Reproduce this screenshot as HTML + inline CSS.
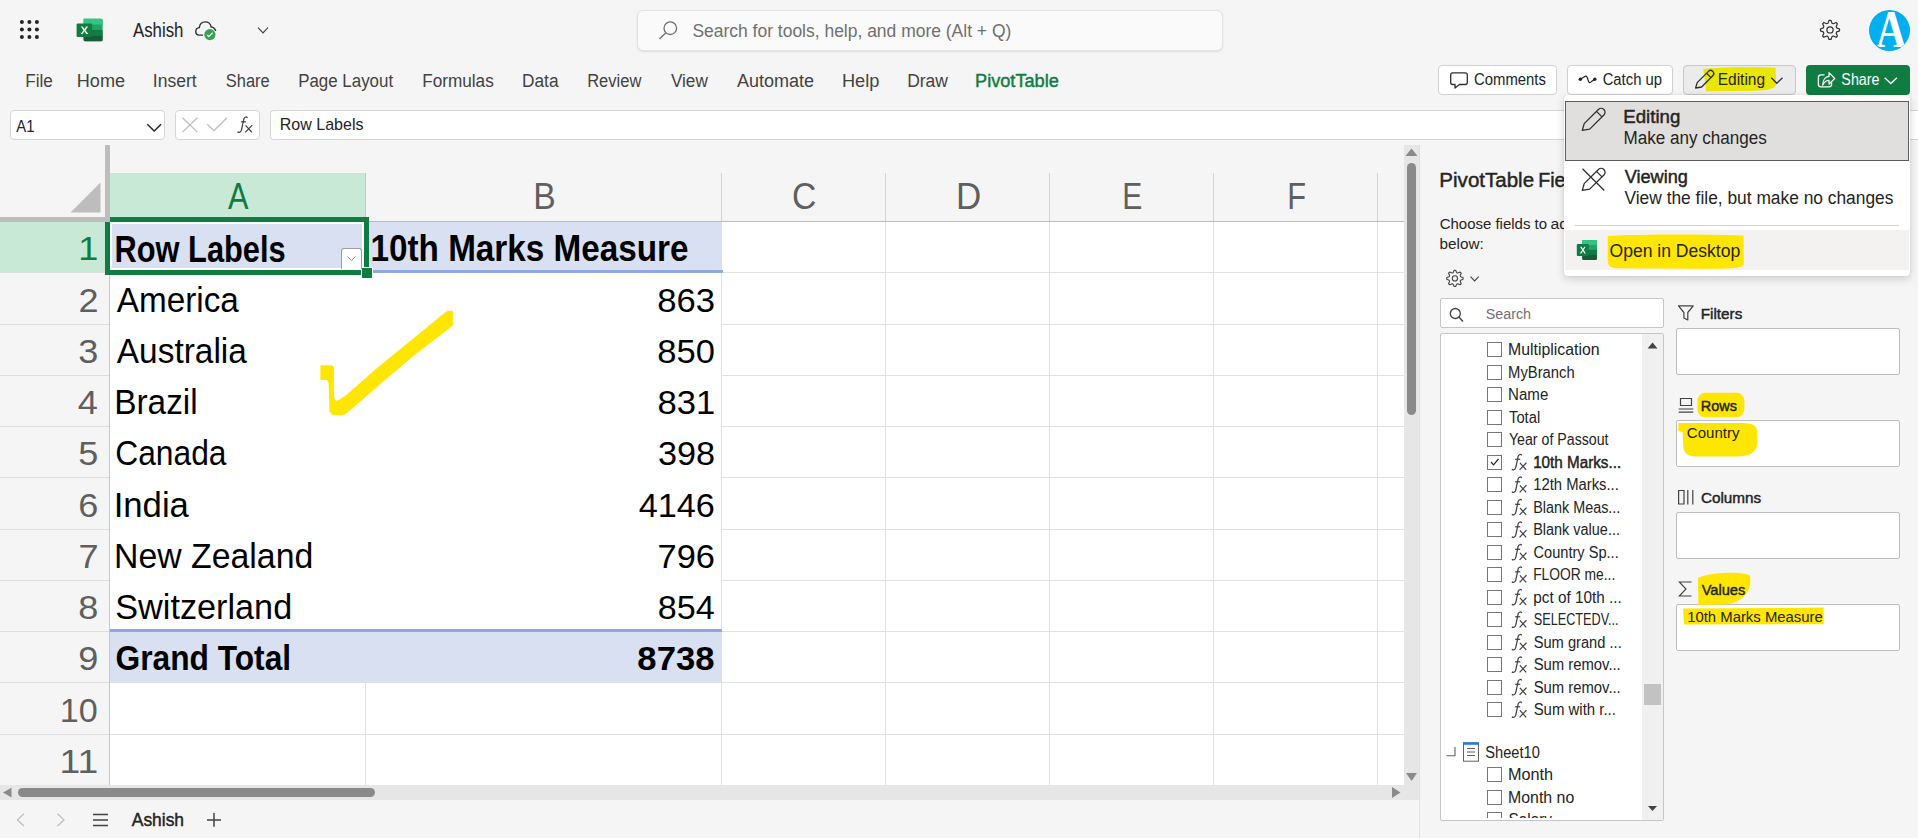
<!DOCTYPE html>
<html><head><meta charset="utf-8">
<style>
*{margin:0;padding:0;box-sizing:border-box}
html,body{width:1918px;height:838px;overflow:hidden;background:#f5f5f5;font-family:"Liberation Sans",sans-serif;position:relative}
.a{position:absolute}
svg{position:absolute;left:0;top:0;overflow:visible}
</style></head><body>

<div class="a" style="left:637px;top:10px;width:586px;height:41px;background:#fafafa;border:1px solid #e3e3e3;border-radius:6px;box-shadow:0 1px 2px rgba(0,0,0,0.10)"></div>
<div class="a" style="left:1438px;top:65px;width:119px;height:30px;background:#fff;border:1px solid #d1d1d1;border-radius:4px"></div>
<div class="a" style="left:1567px;top:65px;width:106px;height:30px;background:#fff;border:1px solid #d1d1d1;border-radius:4px"></div>
<div class="a" style="left:1683px;top:65px;width:113px;height:30px;background:#ebebeb;border:1px solid #c7c7c7;border-radius:4px"></div>
<div class="a" style="left:1806px;top:65px;width:104px;height:30px;background:#107c41;border-radius:4px"></div>
<div class="a" style="left:1869px;top:10px;width:41px;height:41px;background:#00aff0;border-radius:50%"></div>
<div class="a" style="left:270px;top:110px;width:1648px;height:30px;background:#fff;border:1px solid #d6d6d6;border-right:none;border-radius:4px 0 0 4px"></div>
<div class="a" style="left:10px;top:110px;width:155px;height:30px;background:#fff;border:1px solid #d6d6d6;border-radius:4px"></div>
<div class="a" style="left:175px;top:110px;width:85px;height:30px;background:#fff;border:1px solid #d6d6d6;border-radius:4px"></div>
<div class="a" style="left:109px;top:222px;width:1295px;height:563px;background:#fff"></div>
<div class="a" style="left:110px;top:173px;width:255px;height:48px;background:#c8e9d6"></div>
<div class="a" style="left:0px;top:222px;width:105px;height:50px;background:#c8e9d6"></div>
<div class="a" style="left:365px;top:173px;width:1px;height:48px;background:#a4d8b9"></div>
<div class="a" style="left:365px;top:682px;width:1px;height:103px;background:#e1e1e1"></div>
<div class="a" style="left:721px;top:173px;width:1px;height:48px;background:#d4d4d4"></div>
<div class="a" style="left:721px;top:222px;width:1px;height:563px;background:#e1e1e1"></div>
<div class="a" style="left:885px;top:173px;width:1px;height:48px;background:#d4d4d4"></div>
<div class="a" style="left:885px;top:222px;width:1px;height:563px;background:#e1e1e1"></div>
<div class="a" style="left:1049px;top:173px;width:1px;height:48px;background:#d4d4d4"></div>
<div class="a" style="left:1049px;top:222px;width:1px;height:563px;background:#e1e1e1"></div>
<div class="a" style="left:1213px;top:173px;width:1px;height:48px;background:#d4d4d4"></div>
<div class="a" style="left:1213px;top:222px;width:1px;height:563px;background:#e1e1e1"></div>
<div class="a" style="left:1377px;top:173px;width:1px;height:48px;background:#d4d4d4"></div>
<div class="a" style="left:1377px;top:222px;width:1px;height:563px;background:#e1e1e1"></div>
<div class="a" style="left:722px;top:272px;width:682px;height:1px;background:#e1e1e1"></div>
<div class="a" style="left:0px;top:272px;width:109px;height:1px;background:#dedede"></div>
<div class="a" style="left:722px;top:324px;width:682px;height:1px;background:#e1e1e1"></div>
<div class="a" style="left:0px;top:324px;width:109px;height:1px;background:#dedede"></div>
<div class="a" style="left:722px;top:375px;width:682px;height:1px;background:#e1e1e1"></div>
<div class="a" style="left:0px;top:375px;width:109px;height:1px;background:#dedede"></div>
<div class="a" style="left:722px;top:426px;width:682px;height:1px;background:#e1e1e1"></div>
<div class="a" style="left:0px;top:426px;width:109px;height:1px;background:#dedede"></div>
<div class="a" style="left:722px;top:477px;width:682px;height:1px;background:#e1e1e1"></div>
<div class="a" style="left:0px;top:477px;width:109px;height:1px;background:#dedede"></div>
<div class="a" style="left:722px;top:529px;width:682px;height:1px;background:#e1e1e1"></div>
<div class="a" style="left:0px;top:529px;width:109px;height:1px;background:#dedede"></div>
<div class="a" style="left:722px;top:580px;width:682px;height:1px;background:#e1e1e1"></div>
<div class="a" style="left:0px;top:580px;width:109px;height:1px;background:#dedede"></div>
<div class="a" style="left:722px;top:631px;width:682px;height:1px;background:#e1e1e1"></div>
<div class="a" style="left:0px;top:631px;width:109px;height:1px;background:#dedede"></div>
<div class="a" style="left:109px;top:682px;width:1295px;height:1px;background:#e1e1e1"></div>
<div class="a" style="left:0px;top:682px;width:109px;height:1px;background:#dedede"></div>
<div class="a" style="left:109px;top:734px;width:1295px;height:1px;background:#e1e1e1"></div>
<div class="a" style="left:0px;top:734px;width:109px;height:1px;background:#dedede"></div>
<div class="a" style="left:109px;top:222px;width:1px;height:563px;background:#c8c8c8"></div>
<div class="a" style="left:110px;top:222px;width:612px;height:50px;background:#d9e0f2"></div>
<div class="a" style="left:110px;top:631px;width:612px;height:51px;background:#d9e0f2"></div>
<div class="a" style="left:366px;top:270px;width:357px;height:3px;background:#8eaadc"></div>
<div class="a" style="left:110px;top:629px;width:612px;height:3px;background:#8eaadc"></div>
<div class="a" style="left:105px;top:145px;width:5px;height:77px;background:#bdbdbd"></div>
<div class="a" style="left:0px;top:217px;width:110px;height:5px;background:#bdbdbd"></div>
<div class="a" style="left:109px;top:221px;width:1295px;height:1px;background:#bdbdbd"></div>
<div class="a" style="left:110px;top:222px;width:254px;height:48px;border:2px solid #fff"></div>
<div class="a" style="left:105px;top:222px;width:5px;height:53px;background:#107c41"></div>
<div class="a" style="left:110px;top:217px;width:259px;height:5px;background:#107c41"></div>
<div class="a" style="left:364px;top:217px;width:5px;height:51px;background:#107c41"></div>
<div class="a" style="left:105px;top:270px;width:257px;height:5px;background:#107c41"></div>
<div class="a" style="left:361px;top:267px;width:12px;height:12px;background:#fff"></div>
<div class="a" style="left:362px;top:268px;width:10px;height:10px;background:#107c41"></div>
<div class="a" style="left:341px;top:248px;width:21px;height:21px;background:#fff;border:1px solid #9e9e9e;border-bottom:none;border-radius:3px 3px 0 0"></div>
<div class="a" style="left:1404px;top:145px;width:15px;height:655px;background:#e6e6e6"></div>
<div class="a" style="left:0px;top:785px;width:1404px;height:15px;background:#e6e6e6"></div>
<div class="a" style="left:1407px;top:163px;width:9px;height:252px;background:#8a8a8a;border-radius:5px"></div>
<div class="a" style="left:18px;top:788px;width:357px;height:9px;background:#8a8a8a;border-radius:5px"></div>
<div class="a" style="left:1419px;top:145px;width:1px;height:693px;background:#e0e0e0"></div>
<div class="a" style="left:1440px;top:298px;width:224px;height:30px;background:#fff;border:1px solid #c6c6c6;border-radius:2px"></div>
<div class="a" style="left:1440px;top:333px;width:224px;height:488px;background:#fff;border:1px solid #c6c6c6;border-radius:2px"></div>
<div class="a" style="left:1642px;top:334px;width:21px;height:486px;background:#f0f0f0"></div>
<div class="a" style="left:1644px;top:684px;width:17px;height:21px;background:#c2c2c2"></div>
<div class="a" style="left:1676px;top:328px;width:224px;height:47px;background:#fff;border:1px solid #bdbdbd;border-radius:2px"></div>
<div class="a" style="left:1676px;top:420px;width:224px;height:47px;background:#fff;border:1px solid #bdbdbd;border-radius:2px"></div>
<div class="a" style="left:1676px;top:512px;width:224px;height:47px;background:#fff;border:1px solid #bdbdbd;border-radius:2px"></div>
<div class="a" style="left:1676px;top:604px;width:224px;height:47px;background:#fff;border:1px solid #bdbdbd;border-radius:2px"></div>
<svg width="1918" height="838"><rect x="1697.4" y="392.8" width="47" height="24.5" rx="8" fill="#ffe600"/>
<path d="M1697.9 578 C1710 572.5 1740 571 1750 575.5 C1752 590 1745 602 1725 604.5 L1698.5 605 Z" fill="#ffe600"/>
<text x="133.00" y="37.20" style="font-family:'Liberation Sans',sans-serif;font-size:19.86px;font-weight:normal" fill="#242424" textLength="50.42" lengthAdjust="spacingAndGlyphs" >Ashish</text>
<text x="692.41" y="37.10" style="font-family:'Liberation Sans',sans-serif;font-size:18.70px;font-weight:normal" fill="#707070" textLength="318.90" lengthAdjust="spacingAndGlyphs" >Search for tools, help, and more (Alt + Q)</text>
<text x="25.33" y="87.20" style="font-family:'Liberation Sans',sans-serif;font-size:18.99px;font-weight:normal" fill="#424242" textLength="27.56" lengthAdjust="spacingAndGlyphs" >File</text>
<text x="76.75" y="87.20" style="font-family:'Liberation Sans',sans-serif;font-size:18.99px;font-weight:normal" fill="#424242" textLength="48.31" lengthAdjust="spacingAndGlyphs" >Home</text>
<text x="152.82" y="87.20" style="font-family:'Liberation Sans',sans-serif;font-size:18.99px;font-weight:normal" fill="#424242" textLength="43.88" lengthAdjust="spacingAndGlyphs" >Insert</text>
<text x="225.86" y="87.20" style="font-family:'Liberation Sans',sans-serif;font-size:18.99px;font-weight:normal" fill="#424242" textLength="43.84" lengthAdjust="spacingAndGlyphs" >Share</text>
<text x="298.15" y="87.20" style="font-family:'Liberation Sans',sans-serif;font-size:18.99px;font-weight:normal" fill="#424242" textLength="94.95" lengthAdjust="spacingAndGlyphs" >Page Layout</text>
<text x="422.23" y="87.20" style="font-family:'Liberation Sans',sans-serif;font-size:18.99px;font-weight:normal" fill="#424242" textLength="71.53" lengthAdjust="spacingAndGlyphs" >Formulas</text>
<text x="522.02" y="87.20" style="font-family:'Liberation Sans',sans-serif;font-size:18.99px;font-weight:normal" fill="#424242" textLength="36.52" lengthAdjust="spacingAndGlyphs" >Data</text>
<text x="587.18" y="87.20" style="font-family:'Liberation Sans',sans-serif;font-size:18.99px;font-weight:normal" fill="#424242" textLength="54.20" lengthAdjust="spacingAndGlyphs" >Review</text>
<text x="670.91" y="87.20" style="font-family:'Liberation Sans',sans-serif;font-size:18.99px;font-weight:normal" fill="#424242" textLength="36.88" lengthAdjust="spacingAndGlyphs" >View</text>
<text x="736.90" y="87.20" style="font-family:'Liberation Sans',sans-serif;font-size:18.99px;font-weight:normal" fill="#424242" textLength="77.22" lengthAdjust="spacingAndGlyphs" >Automate</text>
<text x="841.94" y="87.20" style="font-family:'Liberation Sans',sans-serif;font-size:18.99px;font-weight:normal" fill="#424242" textLength="37.52" lengthAdjust="spacingAndGlyphs" >Help</text>
<text x="907.20" y="87.20" style="font-family:'Liberation Sans',sans-serif;font-size:18.99px;font-weight:normal" fill="#424242" textLength="40.77" lengthAdjust="spacingAndGlyphs" >Draw</text>
<text x="975.05" y="87.20" style="font-family:'Liberation Sans',sans-serif;font-size:18.99px;font-weight:normal" fill="#107c41" textLength="83.75" lengthAdjust="spacingAndGlyphs"  stroke="#107c41" stroke-width="0.45">PivotTable</text>
<text x="1473.96" y="85.10" style="font-family:'Liberation Sans',sans-serif;font-size:15.80px;font-weight:normal" fill="#242424" textLength="71.96" lengthAdjust="spacingAndGlyphs" >Comments</text>
<text x="1602.66" y="85.10" style="font-family:'Liberation Sans',sans-serif;font-size:15.80px;font-weight:normal" fill="#242424" textLength="59.37" lengthAdjust="spacingAndGlyphs" >Catch up</text>
<text x="1841.36" y="85.10" style="font-family:'Liberation Sans',sans-serif;font-size:15.80px;font-weight:normal" fill="#ffffff" textLength="38.14" lengthAdjust="spacingAndGlyphs" >Share</text>
<text x="16.30" y="132.10" style="font-family:'Liberation Sans',sans-serif;font-size:17.39px;font-weight:normal" fill="#242424" textLength="18.22" lengthAdjust="spacingAndGlyphs" >A1</text>
<text x="279.82" y="130.00" style="font-family:'Liberation Sans',sans-serif;font-size:16.81px;font-weight:normal" fill="#242424" textLength="83.64" lengthAdjust="spacingAndGlyphs" >Row Labels</text>
<text x="228.00" y="209.00" style="font-family:'Liberation Sans',sans-serif;font-size:36.52px;font-weight:normal" fill="#107c41" textLength="20.46" lengthAdjust="spacingAndGlyphs" >A</text>
<text x="533.31" y="209.00" style="font-family:'Liberation Sans',sans-serif;font-size:36.52px;font-weight:normal" fill="#5f5f5f" textLength="22.44" lengthAdjust="spacingAndGlyphs" >B</text>
<text x="792.11" y="209.00" style="font-family:'Liberation Sans',sans-serif;font-size:36.52px;font-weight:normal" fill="#5f5f5f" textLength="24.34" lengthAdjust="spacingAndGlyphs" >C</text>
<text x="955.90" y="209.00" style="font-family:'Liberation Sans',sans-serif;font-size:36.23px;font-weight:normal" fill="#5f5f5f" textLength="25.25" lengthAdjust="spacingAndGlyphs" >D</text>
<text x="1122.29" y="209.00" style="font-family:'Liberation Sans',sans-serif;font-size:36.23px;font-weight:normal" fill="#5f5f5f" textLength="20.07" lengthAdjust="spacingAndGlyphs" >E</text>
<text x="1287.23" y="209.00" style="font-family:'Liberation Sans',sans-serif;font-size:36.23px;font-weight:normal" fill="#5f5f5f" textLength="18.82" lengthAdjust="spacingAndGlyphs" >F</text>
<text x="78.39" y="260.30" style="font-family:'Liberation Sans',sans-serif;font-size:34.06px;font-weight:normal" fill="#107c41" textLength="20.08" lengthAdjust="spacingAndGlyphs" >1</text>
<text x="78.57" y="311.55" style="font-family:'Liberation Sans',sans-serif;font-size:34.06px;font-weight:normal" fill="#5f5f5f" textLength="20.08" lengthAdjust="spacingAndGlyphs" >2</text>
<text x="78.21" y="362.80" style="font-family:'Liberation Sans',sans-serif;font-size:34.06px;font-weight:normal" fill="#5f5f5f" textLength="20.08" lengthAdjust="spacingAndGlyphs" >3</text>
<text x="77.85" y="414.05" style="font-family:'Liberation Sans',sans-serif;font-size:34.06px;font-weight:normal" fill="#5f5f5f" textLength="20.08" lengthAdjust="spacingAndGlyphs" >4</text>
<text x="78.21" y="465.30" style="font-family:'Liberation Sans',sans-serif;font-size:34.06px;font-weight:normal" fill="#5f5f5f" textLength="20.08" lengthAdjust="spacingAndGlyphs" >5</text>
<text x="78.21" y="516.55" style="font-family:'Liberation Sans',sans-serif;font-size:34.06px;font-weight:normal" fill="#5f5f5f" textLength="20.08" lengthAdjust="spacingAndGlyphs" >6</text>
<text x="78.57" y="567.80" style="font-family:'Liberation Sans',sans-serif;font-size:34.06px;font-weight:normal" fill="#5f5f5f" textLength="20.08" lengthAdjust="spacingAndGlyphs" >7</text>
<text x="78.21" y="619.05" style="font-family:'Liberation Sans',sans-serif;font-size:34.06px;font-weight:normal" fill="#5f5f5f" textLength="20.08" lengthAdjust="spacingAndGlyphs" >8</text>
<text x="78.39" y="670.30" style="font-family:'Liberation Sans',sans-serif;font-size:34.06px;font-weight:normal" fill="#5f5f5f" textLength="20.08" lengthAdjust="spacingAndGlyphs" >9</text>
<text x="59.73" y="721.55" style="font-family:'Liberation Sans',sans-serif;font-size:34.06px;font-weight:normal" fill="#5f5f5f" textLength="38.04" lengthAdjust="spacingAndGlyphs" >10</text>
<text x="59.50" y="772.80" style="font-family:'Liberation Sans',sans-serif;font-size:34.06px;font-weight:normal" fill="#5f5f5f" textLength="38.80" lengthAdjust="spacingAndGlyphs" >11</text>
<text x="114.50" y="261.50" style="font-family:'Liberation Sans',sans-serif;font-size:36.81px;font-weight:bold" fill="#000" textLength="171.19" lengthAdjust="spacingAndGlyphs" >Row Labels</text>
<text x="370.50" y="261.30" style="font-family:'Liberation Sans',sans-serif;font-size:36.81px;font-weight:bold" fill="#000" textLength="318.07" lengthAdjust="spacingAndGlyphs" >10th Marks Measure</text>
<text x="116.80" y="311.55" style="font-family:'Liberation Sans',sans-serif;font-size:34.49px;font-weight:normal" fill="#000" textLength="121.99" lengthAdjust="spacingAndGlyphs" >America</text>
<text x="657.24" y="311.55" style="font-family:'Liberation Sans',sans-serif;font-size:33.04px;font-weight:normal" fill="#000" textLength="57.76" lengthAdjust="spacingAndGlyphs" >863</text>
<text x="116.80" y="362.80" style="font-family:'Liberation Sans',sans-serif;font-size:34.49px;font-weight:normal" fill="#000" textLength="130.03" lengthAdjust="spacingAndGlyphs" >Australia</text>
<text x="657.25" y="362.80" style="font-family:'Liberation Sans',sans-serif;font-size:33.04px;font-weight:normal" fill="#000" textLength="57.58" lengthAdjust="spacingAndGlyphs" >850</text>
<text x="114.13" y="414.05" style="font-family:'Liberation Sans',sans-serif;font-size:34.49px;font-weight:normal" fill="#000" textLength="83.57" lengthAdjust="spacingAndGlyphs" >Brazil</text>
<text x="657.44" y="414.05" style="font-family:'Liberation Sans',sans-serif;font-size:33.04px;font-weight:normal" fill="#000" textLength="57.74" lengthAdjust="spacingAndGlyphs" >831</text>
<text x="115.21" y="465.30" style="font-family:'Liberation Sans',sans-serif;font-size:34.49px;font-weight:normal" fill="#000" textLength="111.29" lengthAdjust="spacingAndGlyphs" >Canada</text>
<text x="657.93" y="465.30" style="font-family:'Liberation Sans',sans-serif;font-size:33.04px;font-weight:normal" fill="#000" textLength="57.06" lengthAdjust="spacingAndGlyphs" >398</text>
<text x="113.68" y="516.55" style="font-family:'Liberation Sans',sans-serif;font-size:34.49px;font-weight:normal" fill="#000" textLength="75.24" lengthAdjust="spacingAndGlyphs" >India</text>
<text x="638.72" y="516.55" style="font-family:'Liberation Sans',sans-serif;font-size:33.04px;font-weight:normal" fill="#000" textLength="76.14" lengthAdjust="spacingAndGlyphs" >4146</text>
<text x="114.10" y="567.80" style="font-family:'Liberation Sans',sans-serif;font-size:34.49px;font-weight:normal" fill="#000" textLength="199.18" lengthAdjust="spacingAndGlyphs" >New Zealand</text>
<text x="657.58" y="567.80" style="font-family:'Liberation Sans',sans-serif;font-size:33.04px;font-weight:normal" fill="#000" textLength="57.42" lengthAdjust="spacingAndGlyphs" >796</text>
<text x="115.26" y="619.05" style="font-family:'Liberation Sans',sans-serif;font-size:34.49px;font-weight:normal" fill="#000" textLength="176.94" lengthAdjust="spacingAndGlyphs" >Switzerland</text>
<text x="657.77" y="619.05" style="font-family:'Liberation Sans',sans-serif;font-size:33.04px;font-weight:normal" fill="#000" textLength="56.88" lengthAdjust="spacingAndGlyphs" >854</text>
<text x="115.53" y="670.30" style="font-family:'Liberation Sans',sans-serif;font-size:35.94px;font-weight:bold" fill="#000" textLength="175.60" lengthAdjust="spacingAndGlyphs" >Grand Total</text>
<text x="637.36" y="670.30" style="font-family:'Liberation Sans',sans-serif;font-size:33.62px;font-weight:bold" fill="#000" textLength="77.17" lengthAdjust="spacingAndGlyphs" >8738</text>
<text x="1439.36" y="187.00" style="font-family:'Liberation Sans',sans-serif;font-size:20.58px;font-weight:normal" fill="#242424" textLength="94.74" lengthAdjust="spacingAndGlyphs"  stroke="#242424" stroke-width="0.45">PivotTable</text>
<text x="1538.23" y="187.00" style="font-family:'Liberation Sans',sans-serif;font-size:20.58px;font-weight:normal" fill="#242424" textLength="52.41" lengthAdjust="spacingAndGlyphs"  stroke="#242424" stroke-width="0.45">Fields</text>
<text x="1439.75" y="229.20" style="font-family:'Liberation Sans',sans-serif;font-size:15.36px;font-weight:normal" fill="#242424" textLength="107.26" lengthAdjust="spacingAndGlyphs" >Choose fields to</text>
<text x="1550.47" y="229.20" style="font-family:'Liberation Sans',sans-serif;font-size:15.36px;font-weight:normal" fill="#242424" textLength="89.62" lengthAdjust="spacingAndGlyphs" >add to report</text>
<text x="1439.61" y="248.60" style="font-family:'Liberation Sans',sans-serif;font-size:15.51px;font-weight:normal" fill="#242424" textLength="44.18" lengthAdjust="spacingAndGlyphs" >below:</text>
<text x="1485.76" y="319.00" style="font-family:'Liberation Sans',sans-serif;font-size:15.51px;font-weight:normal" fill="#707070" textLength="45.22" lengthAdjust="spacingAndGlyphs" >Search</text>
<text x="1700.78" y="319.00" style="font-family:'Liberation Sans',sans-serif;font-size:15.51px;font-weight:normal" fill="#242424" textLength="41.49" lengthAdjust="spacingAndGlyphs"  stroke="#242424" stroke-width="0.45">Filters</text>
<text x="1700.84" y="411.00" style="font-family:'Liberation Sans',sans-serif;font-size:15.51px;font-weight:normal" fill="#242424" textLength="36.17" lengthAdjust="spacingAndGlyphs"  stroke="#242424" stroke-width="0.45">Rows</text>
<text x="1700.94" y="503.30" style="font-family:'Liberation Sans',sans-serif;font-size:15.51px;font-weight:normal" fill="#242424" textLength="60.21" lengthAdjust="spacingAndGlyphs"  stroke="#242424" stroke-width="0.45">Columns</text>
<text x="1701.63" y="595.10" style="font-family:'Liberation Sans',sans-serif;font-size:15.51px;font-weight:normal" fill="#242424" textLength="43.66" lengthAdjust="spacingAndGlyphs"  stroke="#242424" stroke-width="0.45">Values</text>
<circle cx="21.9" cy="21.9" r="2.0" fill="#242424"/>
<circle cx="29.4" cy="21.9" r="2.0" fill="#242424"/>
<circle cx="36.9" cy="21.9" r="2.0" fill="#242424"/>
<circle cx="21.9" cy="29.4" r="2.0" fill="#242424"/>
<circle cx="29.4" cy="29.4" r="2.0" fill="#242424"/>
<circle cx="36.9" cy="29.4" r="2.0" fill="#242424"/>
<circle cx="21.9" cy="36.9" r="2.0" fill="#242424"/>
<circle cx="29.4" cy="36.9" r="2.0" fill="#242424"/>
<circle cx="36.9" cy="36.9" r="2.0" fill="#242424"/>
<g transform="translate(76.6,18.8) scale(1.0,1.0)"><path d="M7 0 H24.5 A1.5 1.5 0 0 1 26 1.5 V21 A1.5 1.5 0 0 1 24.5 22.5 H8.5 A1.5 1.5 0 0 1 7 21 Z" fill="#21a366"/><path d="M7 0 H24.5 A1.5 1.5 0 0 1 26 1.5 V5.6 H7 Z" fill="#33c481"/><rect x="7" y="11.2" width="19" height="5.6" fill="#107c41"/><path d="M7 16.8 H26 V21 A1.5 1.5 0 0 1 24.5 22.5 H8.5 A1.5 1.5 0 0 1 7 21 Z" fill="#185c37"/><rect x="0" y="4.6" width="15.5" height="13.5" rx="1.2" fill="#107c41"/><path d="M4.2 7.6 L6.9 11.35 L4.0 15.2 H5.9 L7.85 12.5 L9.8 15.2 H11.7 L8.8 11.35 L11.5 7.6 H9.6 L7.85 10.2 L6.1 7.6 Z" fill="#fff"/></g>
<path d="M202.6 35.1 H199.3 C197.3 35.1 195.8 33.5 195.8 31.4 C195.8 29.4 197.3 27.8 199.3 27.6 C199.8 24.2 202.3 21.9 205.3 21.9 C208.2 21.9 210.6 24.1 211.1 26.9 C213.2 27.2 214.8 28.4 215.6 30.4" fill="none" stroke="#303030" stroke-width="1.4" stroke-linecap="round"/>
<circle cx="209.9" cy="34.6" r="5.6" fill="#36a152"/>
<path d="M207.3 35 L208.9 36.6 L212.6 32.7" fill="none" stroke="#fff" stroke-width="1.3"/>
<path d="M258 27.6 L263 32.8 L268 27.6" fill="none" stroke="#424242" stroke-width="1.2"/>
<circle cx="670.3" cy="28.2" r="6.3" fill="none" stroke="#707070" stroke-width="1.3"/><path d="M665.8 32.7 L659.5 39" stroke="#707070" stroke-width="1.4"/>
<path d="M1829.06 20.35 L1830.94 20.35 L1832.03 23.20 L1833.30 23.73 L1836.09 22.48 L1837.42 23.81 L1836.17 26.60 L1836.70 27.87 L1839.55 28.96 L1839.55 30.84 L1836.70 31.93 L1836.17 33.20 L1837.42 35.99 L1836.09 37.32 L1833.30 36.07 L1832.03 36.60 L1830.94 39.45 L1829.06 39.45 L1827.97 36.60 L1826.70 36.07 L1823.91 37.32 L1822.58 35.99 L1823.83 33.20 L1823.30 31.93 L1820.45 30.84 L1820.45 28.96 L1823.30 27.87 L1823.83 26.60 L1822.58 23.81 L1823.91 22.48 L1826.70 23.73 L1827.97 23.20 Z" fill="none" stroke="#303030" stroke-width="1.2" stroke-linejoin="round"/>
<circle cx="1830" cy="29.9" r="3.1" fill="none" stroke="#303030" stroke-width="1.2"/>
<clipPath id="av"><circle cx="1890.1" cy="29.9" r="20.2"/></clipPath>
<text clip-path="url(#av)" x="1876.08" y="46.50" style="font-family:'Liberation Serif',serif;font-size:53.79px;font-weight:bold" fill="#ffffff" textLength="30.22" lengthAdjust="spacingAndGlyphs" >A</text>
<path d="M1452.7 72.8 H1465.3 A2 2 0 0 1 1467.3 74.8 V82.5 A2 2 0 0 1 1465.3 84.5 H1459.4 L1455 88 V84.5 H1452.7 A2 2 0 0 1 1450.7 82.5 V74.8 A2 2 0 0 1 1452.7 72.8 Z" fill="none" stroke="#303030" stroke-width="1.3" stroke-linejoin="round"/>
<circle cx="1580.3" cy="79.3" r="1.7" fill="#242424"/><circle cx="1594.8" cy="79.3" r="1.7" fill="#242424"/>
<path d="M1580.3 79.3 L1584 77 C1585.5 75.8 1586.5 75.5 1587.2 77.5 L1588.6 81.5 C1589.3 83.2 1590.4 83 1591.5 81.5 L1594.8 79.3" fill="none" stroke="#242424" stroke-width="1.2"/>
<path d="M1703.2 69 C1720 67.5 1745 66.8 1775.5 67.8 L1776 84.5 C1775 88.5 1768 90.5 1755 90.8 L1706 91.3 L1705.5 84 Z" fill="#e9e600"/>
<path d="M1695.6 88 L1697.2 82.6 L1708.4 71.4 C1709.6 70.2 1711.6 70.2 1712.8 71.4 C1714 72.6 1714 74.6 1712.8 75.8 L1701.6 87 Z M1706.6 73.2 L1711 77.6" fill="none" stroke="#303030" stroke-width="1.3" stroke-linejoin="round"/>
<text x="1717.76" y="84.90" style="font-family:'Liberation Sans',sans-serif;font-size:15.80px;font-weight:normal" fill="#242424" textLength="47.28" lengthAdjust="spacingAndGlyphs" >Editing</text>
<path d="M1771.3 77.8 L1776.8 83.3 L1782.5 77.8" fill="none" stroke="#303030" stroke-width="1.3"/>
<path d="M1824.5 74.8 H1821 A2.6 2.6 0 0 0 1818.4 77.4 V84.2 A2.6 2.6 0 0 0 1821 86.8 H1829 A2.6 2.6 0 0 0 1831.6 84.2 V82.8" fill="none" stroke="#fff" stroke-width="1.3"/>
<path d="M1822.6 85.2 C1822.8 79.8 1825.6 76.6 1829 76.4 V72.6 L1834.8 78.5 L1829 84.2 V80.4 C1826.4 80.4 1824.2 82 1822.6 85.2 Z" fill="none" stroke="#fff" stroke-width="1.2" stroke-linejoin="round"/>
<path d="M1884.7 77.8 L1890.8 83.5 L1896.9 77.8" fill="none" stroke="#fff" stroke-width="1.3"/>
<path d="M147.3 124.2 L154.2 131 L161.1 124.2" fill="none" stroke="#242424" stroke-width="1.5"/>
<path d="M182.5 117.8 L197.4 132.1 M197.4 117.8 L182.5 132.1" stroke="#bdbdbd" stroke-width="1.3"/>
<path d="M207.3 124.3 L214 130.6 L226.8 118" fill="none" stroke="#bdbdbd" stroke-width="1.3"/>
<g transform="translate(237.3,116.3) scale(1.0)" fill="none" stroke="#424242" stroke-width="1.25"><path d="M10.2 1.5 C9.3 0.4 7.4 0.2 6.6 2.4 L4.2 13.6 C3.6 16.3 1.5 16.6 0.3 15.4"/><path d="M3.6 5.5 H8.6"/><path d="M8.3 9 L14.6 16 M14.9 8.8 L8.0 16.1"/></g>
<path d="M100.5 182.5 V212.5 H70.5 Z" fill="#bdbdbd"/>
<path d="M347.5 256.5 L351.5 260.5 L355.5 256.5" fill="none" stroke="#8a8a8a" stroke-width="1"/>
<path d="M320.4 365.2 L331.6 365.2 Q333.9 365.6 333.9 367.8 L333.9 395.4 Q334.5 399.8 336.5 400.7 Q340 399.5 345.8 395.4 L375.6 369.3 L447.2 310.7 L452.9 310.7 L452.9 325.4 L414.4 355.2 L380.1 384.3 L350.3 410.3 Q345.5 414.8 341.3 415.6 L332.4 414.8 Q329.6 413 329.4 410.3 L328.6 383.5 Q328.2 380.4 326.4 380.1 L320.4 379.8 Z" fill="#ffe600"/>
<path d="M1405.5 156 L1411.5 148.5 L1417.5 156 Z" fill="#8a8a8a"/>
<path d="M1406 773 L1417 773 L1411.5 781 Z" fill="#8a8a8a"/>
<path d="M11.5 787.7 L11.5 797.5 L3 792.6 Z" fill="#8a8a8a"/>
<path d="M1392 787 L1392 798 L1400.5 792.5 Z" fill="#8a8a8a"/>
<path d="M24 813.8 L17.5 819.9 L24 826" fill="none" stroke="#bdbdbd" stroke-width="1.3"/>
<path d="M57.5 813.8 L64 819.9 L57.5 826" fill="none" stroke="#bdbdbd" stroke-width="1.3"/>
<path d="M93 814.5 H108 M93 820 H108 M93 825.5 H108" stroke="#424242" stroke-width="1.4"/>
<text x="131.80" y="825.90" style="font-family:'Liberation Sans',sans-serif;font-size:18.84px;font-weight:normal" fill="#242424" textLength="52.26" lengthAdjust="spacingAndGlyphs"  stroke="#242424" stroke-width="0.45">Ashish</text>
<path d="M214 813 V826.7 M207 819.9 H221" stroke="#424242" stroke-width="1.5"/>
<path d="M1454.10 270.24 L1455.70 270.24 L1456.64 272.66 L1457.73 273.11 L1460.10 272.06 L1461.24 273.20 L1460.19 275.57 L1460.64 276.66 L1463.06 277.60 L1463.06 279.20 L1460.64 280.14 L1460.19 281.23 L1461.24 283.60 L1460.10 284.74 L1457.73 283.69 L1456.64 284.14 L1455.70 286.56 L1454.10 286.56 L1453.16 284.14 L1452.07 283.69 L1449.70 284.74 L1448.56 283.60 L1449.61 281.23 L1449.16 280.14 L1446.74 279.20 L1446.74 277.60 L1449.16 276.66 L1449.61 275.57 L1448.56 273.20 L1449.70 272.06 L1452.07 273.11 L1453.16 272.66 Z" fill="none" stroke="#424242" stroke-width="1.1" stroke-linejoin="round"/>
<circle cx="1454.9" cy="278.4" r="2.6" fill="none" stroke="#424242" stroke-width="1.1"/>
<path d="M1470.5 276.7 L1474.6 281 L1478.8 276.7" fill="none" stroke="#424242" stroke-width="1.1"/>
<circle cx="1455.3" cy="313.5" r="5" fill="none" stroke="#424242" stroke-width="1.3"/><path d="M1458.9 317.1 L1463 321.5" stroke="#424242" stroke-width="1.4"/>
<path d="M1647.6 348.5 L1652.5 342.6 L1657.5 348.5 Z" fill="#424242"/>
<path d="M1648 806 L1657 806 L1652.5 811 Z" fill="#424242"/>
<clipPath id="lst"><rect x="1441" y="334" width="201" height="484"/></clipPath><g clip-path="url(#lst)">
<rect x="1487.5" y="342.5" width="14" height="14" fill="#fff" stroke="#767676" stroke-width="1"/>
<text x="1508.03" y="355.10" style="font-family:'Liberation Sans',sans-serif;font-size:15.80px;font-weight:normal" fill="#242424" textLength="91.61" lengthAdjust="spacingAndGlyphs" >Multiplication</text>
<rect x="1487.5" y="365.5" width="14" height="14" fill="#fff" stroke="#767676" stroke-width="1"/>
<text x="1508.12" y="377.60" style="font-family:'Liberation Sans',sans-serif;font-size:15.80px;font-weight:normal" fill="#242424" textLength="66.57" lengthAdjust="spacingAndGlyphs" >MyBranch</text>
<rect x="1487.5" y="387.5" width="14" height="14" fill="#fff" stroke="#767676" stroke-width="1"/>
<text x="1508.09" y="400.10" style="font-family:'Liberation Sans',sans-serif;font-size:15.80px;font-weight:normal" fill="#242424" textLength="40.22" lengthAdjust="spacingAndGlyphs" >Name</text>
<rect x="1487.5" y="410.5" width="14" height="14" fill="#fff" stroke="#767676" stroke-width="1"/>
<text x="1509.00" y="422.60" style="font-family:'Liberation Sans',sans-serif;font-size:15.80px;font-weight:normal" fill="#242424" textLength="31.19" lengthAdjust="spacingAndGlyphs" >Total</text>
<rect x="1487.5" y="432.5" width="14" height="14" fill="#fff" stroke="#767676" stroke-width="1"/>
<text x="1508.95" y="445.10" style="font-family:'Liberation Sans',sans-serif;font-size:15.80px;font-weight:normal" fill="#242424" textLength="99.58" lengthAdjust="spacingAndGlyphs" >Year of Passout</text>
<rect x="1487.5" y="455.5" width="14" height="14" fill="#fff" stroke="#767676" stroke-width="1"/>
<g transform="translate(1511.6,453.8) scale(1.0)" fill="none" stroke="#424242" stroke-width="1.25"><path d="M10.2 1.5 C9.3 0.4 7.4 0.2 6.6 2.4 L4.2 13.6 C3.6 16.3 1.5 16.6 0.3 15.4"/><path d="M3.6 5.5 H8.6"/><path d="M8.3 9 L14.6 16 M14.9 8.8 L8.0 16.1"/></g>
<text x="1533.16" y="467.60" style="font-family:'Liberation Sans',sans-serif;font-size:15.80px;font-weight:normal" fill="#242424" textLength="87.99" lengthAdjust="spacingAndGlyphs"  stroke="#242424" stroke-width="0.45">10th Marks...</text>
<path d="M1491 462.0 L1493.5 464.8 L1498.5 459.0" fill="none" stroke="#242424" stroke-width="1.2"/>
<rect x="1487.5" y="477.5" width="14" height="14" fill="#fff" stroke="#767676" stroke-width="1"/>
<g transform="translate(1511.6,476.3) scale(1.0)" fill="none" stroke="#424242" stroke-width="1.25"><path d="M10.2 1.5 C9.3 0.4 7.4 0.2 6.6 2.4 L4.2 13.6 C3.6 16.3 1.5 16.6 0.3 15.4"/><path d="M3.6 5.5 H8.6"/><path d="M8.3 9 L14.6 16 M14.9 8.8 L8.0 16.1"/></g>
<text x="1533.19" y="490.10" style="font-family:'Liberation Sans',sans-serif;font-size:15.80px;font-weight:normal" fill="#242424" textLength="85.62" lengthAdjust="spacingAndGlyphs" >12th Marks...</text>
<rect x="1487.5" y="500.5" width="14" height="14" fill="#fff" stroke="#767676" stroke-width="1"/>
<g transform="translate(1511.6,498.8) scale(1.0)" fill="none" stroke="#424242" stroke-width="1.25"><path d="M10.2 1.5 C9.3 0.4 7.4 0.2 6.6 2.4 L4.2 13.6 C3.6 16.3 1.5 16.6 0.3 15.4"/><path d="M3.6 5.5 H8.6"/><path d="M8.3 9 L14.6 16 M14.9 8.8 L8.0 16.1"/></g>
<text x="1533.15" y="512.60" style="font-family:'Liberation Sans',sans-serif;font-size:15.80px;font-weight:normal" fill="#242424" textLength="87.19" lengthAdjust="spacingAndGlyphs" >Blank Meas...</text>
<rect x="1487.5" y="522.5" width="14" height="14" fill="#fff" stroke="#767676" stroke-width="1"/>
<g transform="translate(1511.6,521.3) scale(1.0)" fill="none" stroke="#424242" stroke-width="1.25"><path d="M10.2 1.5 C9.3 0.4 7.4 0.2 6.6 2.4 L4.2 13.6 C3.6 16.3 1.5 16.6 0.3 15.4"/><path d="M3.6 5.5 H8.6"/><path d="M8.3 9 L14.6 16 M14.9 8.8 L8.0 16.1"/></g>
<text x="1533.14" y="535.10" style="font-family:'Liberation Sans',sans-serif;font-size:15.80px;font-weight:normal" fill="#242424" textLength="86.81" lengthAdjust="spacingAndGlyphs" >Blank value...</text>
<rect x="1487.5" y="545.5" width="14" height="14" fill="#fff" stroke="#767676" stroke-width="1"/>
<g transform="translate(1511.6,543.8) scale(1.0)" fill="none" stroke="#424242" stroke-width="1.25"><path d="M10.2 1.5 C9.3 0.4 7.4 0.2 6.6 2.4 L4.2 13.6 C3.6 16.3 1.5 16.6 0.3 15.4"/><path d="M3.6 5.5 H8.6"/><path d="M8.3 9 L14.6 16 M14.9 8.8 L8.0 16.1"/></g>
<text x="1533.57" y="557.60" style="font-family:'Liberation Sans',sans-serif;font-size:15.80px;font-weight:normal" fill="#242424" textLength="85.16" lengthAdjust="spacingAndGlyphs" >Country Sp...</text>
<rect x="1487.5" y="567.5" width="14" height="14" fill="#fff" stroke="#767676" stroke-width="1"/>
<g transform="translate(1511.6,566.3) scale(1.0)" fill="none" stroke="#424242" stroke-width="1.25"><path d="M10.2 1.5 C9.3 0.4 7.4 0.2 6.6 2.4 L4.2 13.6 C3.6 16.3 1.5 16.6 0.3 15.4"/><path d="M3.6 5.5 H8.6"/><path d="M8.3 9 L14.6 16 M14.9 8.8 L8.0 16.1"/></g>
<text x="1533.20" y="580.10" style="font-family:'Liberation Sans',sans-serif;font-size:15.80px;font-weight:normal" fill="#242424" textLength="82.05" lengthAdjust="spacingAndGlyphs" >FLOOR me...</text>
<rect x="1487.5" y="590.5" width="14" height="14" fill="#fff" stroke="#767676" stroke-width="1"/>
<g transform="translate(1511.6,588.8) scale(1.0)" fill="none" stroke="#424242" stroke-width="1.25"><path d="M10.2 1.5 C9.3 0.4 7.4 0.2 6.6 2.4 L4.2 13.6 C3.6 16.3 1.5 16.6 0.3 15.4"/><path d="M3.6 5.5 H8.6"/><path d="M8.3 9 L14.6 16 M14.9 8.8 L8.0 16.1"/></g>
<text x="1533.31" y="602.60" style="font-family:'Liberation Sans',sans-serif;font-size:15.80px;font-weight:normal" fill="#242424" textLength="88.49" lengthAdjust="spacingAndGlyphs" >pct of 10th ...</text>
<rect x="1487.5" y="612.5" width="14" height="14" fill="#fff" stroke="#767676" stroke-width="1"/>
<g transform="translate(1511.6,611.3) scale(1.0)" fill="none" stroke="#424242" stroke-width="1.25"><path d="M10.2 1.5 C9.3 0.4 7.4 0.2 6.6 2.4 L4.2 13.6 C3.6 16.3 1.5 16.6 0.3 15.4"/><path d="M3.6 5.5 H8.6"/><path d="M8.3 9 L14.6 16 M14.9 8.8 L8.0 16.1"/></g>
<text x="1533.73" y="625.10" style="font-family:'Liberation Sans',sans-serif;font-size:15.80px;font-weight:normal" fill="#242424" textLength="84.85" lengthAdjust="spacingAndGlyphs" >SELECTEDV...</text>
<rect x="1487.5" y="635.5" width="14" height="14" fill="#fff" stroke="#767676" stroke-width="1"/>
<g transform="translate(1511.6,633.8) scale(1.0)" fill="none" stroke="#424242" stroke-width="1.25"><path d="M10.2 1.5 C9.3 0.4 7.4 0.2 6.6 2.4 L4.2 13.6 C3.6 16.3 1.5 16.6 0.3 15.4"/><path d="M3.6 5.5 H8.6"/><path d="M8.3 9 L14.6 16 M14.9 8.8 L8.0 16.1"/></g>
<text x="1533.64" y="647.60" style="font-family:'Liberation Sans',sans-serif;font-size:15.80px;font-weight:normal" fill="#242424" textLength="88.13" lengthAdjust="spacingAndGlyphs" >Sum grand ...</text>
<rect x="1487.5" y="657.5" width="14" height="14" fill="#fff" stroke="#767676" stroke-width="1"/>
<g transform="translate(1511.6,656.3) scale(1.0)" fill="none" stroke="#424242" stroke-width="1.25"><path d="M10.2 1.5 C9.3 0.4 7.4 0.2 6.6 2.4 L4.2 13.6 C3.6 16.3 1.5 16.6 0.3 15.4"/><path d="M3.6 5.5 H8.6"/><path d="M8.3 9 L14.6 16 M14.9 8.8 L8.0 16.1"/></g>
<text x="1533.63" y="670.10" style="font-family:'Liberation Sans',sans-serif;font-size:15.80px;font-weight:normal" fill="#242424" textLength="87.13" lengthAdjust="spacingAndGlyphs" >Sum remov...</text>
<rect x="1487.5" y="680.5" width="14" height="14" fill="#fff" stroke="#767676" stroke-width="1"/>
<g transform="translate(1511.6,678.8) scale(1.0)" fill="none" stroke="#424242" stroke-width="1.25"><path d="M10.2 1.5 C9.3 0.4 7.4 0.2 6.6 2.4 L4.2 13.6 C3.6 16.3 1.5 16.6 0.3 15.4"/><path d="M3.6 5.5 H8.6"/><path d="M8.3 9 L14.6 16 M14.9 8.8 L8.0 16.1"/></g>
<text x="1533.63" y="692.60" style="font-family:'Liberation Sans',sans-serif;font-size:15.80px;font-weight:normal" fill="#242424" textLength="87.13" lengthAdjust="spacingAndGlyphs" >Sum remov...</text>
<rect x="1487.5" y="702.5" width="14" height="14" fill="#fff" stroke="#767676" stroke-width="1"/>
<g transform="translate(1511.6,701.3) scale(1.0)" fill="none" stroke="#424242" stroke-width="1.25"><path d="M10.2 1.5 C9.3 0.4 7.4 0.2 6.6 2.4 L4.2 13.6 C3.6 16.3 1.5 16.6 0.3 15.4"/><path d="M3.6 5.5 H8.6"/><path d="M8.3 9 L14.6 16 M14.9 8.8 L8.0 16.1"/></g>
<text x="1533.63" y="715.10" style="font-family:'Liberation Sans',sans-serif;font-size:15.80px;font-weight:normal" fill="#242424" textLength="82.24" lengthAdjust="spacingAndGlyphs" >Sum with r...</text>
<path d="M1455 747 V755.8 H1446.5" fill="none" stroke="#616161" stroke-width="1.1"/>
<rect x="1463.5" y="743" width="15" height="18.2" fill="#fff" stroke="#616161" stroke-width="1"/><rect x="1463" y="742.2" width="16" height="2.6" fill="#2b7cd3"/>
<path d="M1467 748.5 H1475 M1467 752 H1475 M1467 755.5 H1475" stroke="#616161" stroke-width="1"/>
<text x="1485.34" y="758.10" style="font-family:'Liberation Sans',sans-serif;font-size:15.80px;font-weight:normal" fill="#242424" textLength="54.48" lengthAdjust="spacingAndGlyphs" >Sheet10</text>
<rect x="1487.5" y="767.5" width="14" height="14" fill="#fff" stroke="#767676" stroke-width="1"/>
<text x="1508.00" y="780.10" style="font-family:'Liberation Sans',sans-serif;font-size:15.80px;font-weight:normal" fill="#242424" textLength="45.15" lengthAdjust="spacingAndGlyphs" >Month</text>
<rect x="1487.5" y="790.5" width="14" height="14" fill="#fff" stroke="#767676" stroke-width="1"/>
<text x="1508.03" y="802.60" style="font-family:'Liberation Sans',sans-serif;font-size:15.80px;font-weight:normal" fill="#242424" textLength="66.20" lengthAdjust="spacingAndGlyphs" >Month no</text>
<rect x="1487.5" y="812.5" width="14" height="14" fill="#fff" stroke="#767676" stroke-width="1"/>
<text x="1508.61" y="825.10" style="font-family:'Liberation Sans',sans-serif;font-size:15.80px;font-weight:normal" fill="#242424" textLength="43.38" lengthAdjust="spacingAndGlyphs" >Salary</text>
</g>
<path d="M1678.5 305.8 H1693.2 L1687.8 312.5 V320 L1683.9 318 V312.5 Z" fill="none" stroke="#424242" stroke-width="1.2" stroke-linejoin="round"/>
<path d="M1680.5 398.5 H1691.5 V405.5 H1680.5 Z M1678.7 409 H1693.3 M1678.7 412.2 H1693.3" fill="none" stroke="#424242" stroke-width="1.2"/>
<path d="M1678.6 490.5 H1684 V504 H1678.6 Z M1687.8 490 V504.5 M1692.8 490 V504.5" fill="none" stroke="#424242" stroke-width="1.2"/>
<path d="M1691.5 582 H1679.3 L1686 589 L1679.3 596 H1691.5" fill="none" stroke="#424242" stroke-width="1.1"/>
<path d="M1678.3 423 H1740 C1757 423.5 1757.5 425 1757.5 440 C1757 452 1752 456.5 1735 456.5 H1695 C1684 456 1683 450 1683 440 L1682.5 432 L1678.5 431 Z" fill="#ffe600"/>
<text x="1686.85" y="437.80" style="font-family:'Liberation Sans',sans-serif;font-size:15.51px;font-weight:normal" fill="#242424" textLength="52.68" lengthAdjust="spacingAndGlyphs" >Country</text>
<path d="M1683.1 608.5 L1823.7 607.6 L1823.7 624.2 L1684 624.6 Z" fill="#ffe600"/>
<text x="1687.18" y="621.90" style="font-family:'Liberation Sans',sans-serif;font-size:15.51px;font-weight:normal" fill="#242424" textLength="135.58" lengthAdjust="spacingAndGlyphs" >10th Marks Measure</text></svg>
<div class="a" style="left:1564px;top:95px;width:346px;height:181px;background:#fff;border-radius:4px;box-shadow:0 3px 8px rgba(0,0,0,0.16),0 0 2px rgba(0,0,0,0.10)"></div>
<div class="a" style="left:1565px;top:101px;width:344px;height:60px;background:#e1dfdd;border:1px solid #5c5c5c"></div>
<div class="a" style="left:1575px;top:225px;width:324px;height:1px;background:#d1d1d1"></div>
<div class="a" style="left:1565px;top:230px;width:344px;height:40px;background:#f3f2f1"></div>
<svg width="1918" height="838"><path d="M1582.3 130.4 L1584.2 123.6 L1598.4 109.5 C1599.9 108 1602.4 108 1603.9 109.5 C1605.4 111 1605.4 113.5 1603.9 115 L1589.7 129.1 Z M1596.5 111.4 L1602 116.9" fill="none" stroke="#303030" stroke-width="1.3" stroke-linejoin="round"/>
<text x="1623.31" y="123.00" style="font-family:'Liberation Sans',sans-serif;font-size:18.41px;font-weight:normal" fill="#242424" textLength="56.95" lengthAdjust="spacingAndGlyphs"  stroke="#242424" stroke-width="0.45">Editing</text>
<text x="1623.43" y="143.50" style="font-family:'Liberation Sans',sans-serif;font-size:18.41px;font-weight:normal" fill="#242424" textLength="143.35" lengthAdjust="spacingAndGlyphs" >Make any changes</text>
<path d="M1582.3 190.4 L1584.2 183.6 L1598.4 169.5 C1599.9 168 1602.4 168 1603.9 169.5 C1605.4 171 1605.4 173.5 1603.9 175 L1589.7 189.1 Z M1596.5 171.4 L1602 176.9 M1582.5 168.8 L1604.3 190.5" fill="none" stroke="#303030" stroke-width="1.3" stroke-linejoin="round"/>
<text x="1624.71" y="182.70" style="font-family:'Liberation Sans',sans-serif;font-size:18.41px;font-weight:normal" fill="#242424" textLength="63.25" lengthAdjust="spacingAndGlyphs"  stroke="#242424" stroke-width="0.45">Viewing</text>
<text x="1624.51" y="203.90" style="font-family:'Liberation Sans',sans-serif;font-size:18.41px;font-weight:normal" fill="#242424" textLength="268.92" lengthAdjust="spacingAndGlyphs" >View the file, but make no changes</text>
<path d="M1607.8 236 C1640 234.2 1700 234 1743.5 235.5 L1743.8 264 C1742 268.5 1735 268.8 1700 268.8 L1615 268.2 C1609 267.5 1607.6 265 1607.6 258 Z" fill="#ffe600"/>
<g transform="translate(1576.8,239.9) scale(0.775,0.89)"><path d="M7 0 H24.5 A1.5 1.5 0 0 1 26 1.5 V21 A1.5 1.5 0 0 1 24.5 22.5 H8.5 A1.5 1.5 0 0 1 7 21 Z" fill="#21a366"/><path d="M7 0 H24.5 A1.5 1.5 0 0 1 26 1.5 V5.6 H7 Z" fill="#33c481"/><rect x="7" y="11.2" width="19" height="5.6" fill="#107c41"/><path d="M7 16.8 H26 V21 A1.5 1.5 0 0 1 24.5 22.5 H8.5 A1.5 1.5 0 0 1 7 21 Z" fill="#185c37"/><rect x="0" y="4.6" width="15.5" height="13.5" rx="1.2" fill="#107c41"/><path d="M4.2 7.6 L6.9 11.35 L4.0 15.2 H5.9 L7.85 12.5 L9.8 15.2 H11.7 L8.8 11.35 L11.5 7.6 H9.6 L7.85 10.2 L6.1 7.6 Z" fill="#fff"/></g>
<text x="1609.51" y="256.90" style="font-family:'Liberation Sans',sans-serif;font-size:18.41px;font-weight:normal" fill="#242424" textLength="130.67" lengthAdjust="spacingAndGlyphs" >Open in Desktop</text></svg>
</body></html>
